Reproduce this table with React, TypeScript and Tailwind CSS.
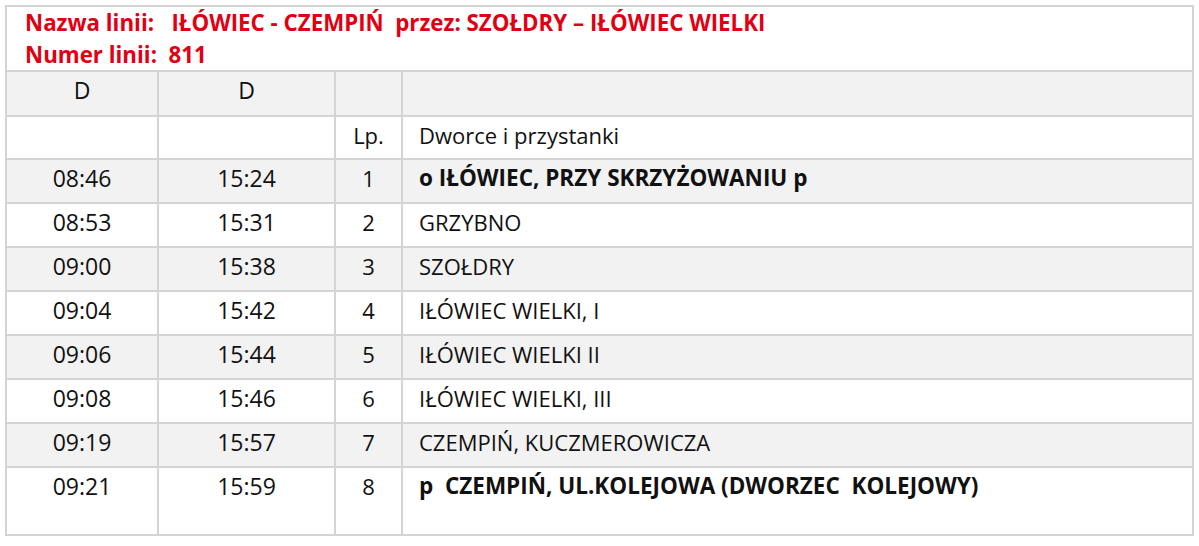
import React from "react";

const rows = [
  { a: "08:46", b: "15:24", n: "1", s: "o IŁÓWIEC, PRZY SKRZYŻOWANIU p", bold: true, grey: true },
  { a: "08:53", b: "15:31", n: "2", s: "GRZYBNO", grey: false },
  { a: "09:00", b: "15:38", n: "3", s: "SZOŁDRY", grey: true },
  { a: "09:04", b: "15:42", n: "4", s: "IŁÓWIEC WIELKI, I", grey: false },
  { a: "09:06", b: "15:44", n: "5", s: "IŁÓWIEC WIELKI II", grey: true },
  { a: "09:08", b: "15:46", n: "6", s: "IŁÓWIEC WIELKI, III", grey: false },
  { a: "09:19", b: "15:57", n: "7", s: "CZEMPIŃ, KUCZMEROWICZA", grey: true },
];

function Row({
  cells,
  grey,
  h,
  bold,
  last,
}: {
  cells: string[];
  grey?: boolean;
  h: string;
  bold?: boolean;
  last?: boolean;
}) {
  const bg = grey ? "bg-[#f2f2f2]" : "bg-white";
  const bb = last ? "" : "border-b-2 border-[#d4d4d4]";
  return (
    <div className={`flex ${bg} ${bb} ${h}`}>
      <div className="w-[152px] shrink-0 border-r-2 border-[#d4d4d4] text-center pt-[3px] text-[23px]">{cells[0]}</div>
      <div className="w-[177px] shrink-0 border-r-2 border-[#d4d4d4] text-center pt-[3px] text-[23px]">{cells[1]}</div>
      <div className="w-[67px] shrink-0 border-r-2 border-[#d4d4d4] text-center pt-[3px] text-[22px]">{cells[2]}</div>
      <div
        className={`flex-1 pl-[16px] pt-[3px] whitespace-pre ${bold ? "font-bold text-[22.5px]" : "text-[22px]"}`}
      >
        {cells[3]}
      </div>
    </div>
  );
}

export default function App() {
  return (
    <div className="w-[1199px] h-[546px] bg-white pt-[5px] pl-[5px]" style={{ fontFamily: '"Open Sans", "Noto Sans", sans-serif' }}>
      <div className="w-[1189px] border-2 border-[#d4d4d4] leading-[30px] text-[#111]">
        <div className="h-[65px] border-b-2 border-[#d4d4d4] pl-[18px] text-[#e00012] font-bold text-[22.3px] leading-[32px] whitespace-pre">
          <div>{"Nazwa linii:   IŁÓWIEC - CZEMPIŃ  przez: SZOŁDRY – IŁÓWIEC WIELKI"}</div>
          <div>{"Numer linii:  811"}</div>
        </div>
        <Row cells={["D", "D", "", ""]} grey h="h-[45px]" />
        <Row cells={["", "", "Lp.", "Dworce i przystanki"]} h="h-[43px]" />
        {rows.map((r, i) => (
          <Row key={i} cells={[r.a, r.b, r.n, r.s]} grey={r.grey} bold={r.bold} h="h-[44px]" />
        ))}
        <Row
          cells={["09:21", "15:59", "8", "p  CZEMPIŃ, UL.KOLEJOWA (DWORZEC  KOLEJOWY)"]}
          bold
          h="h-[66px]"
          last
        />
      </div>
    </div>
  );
}
